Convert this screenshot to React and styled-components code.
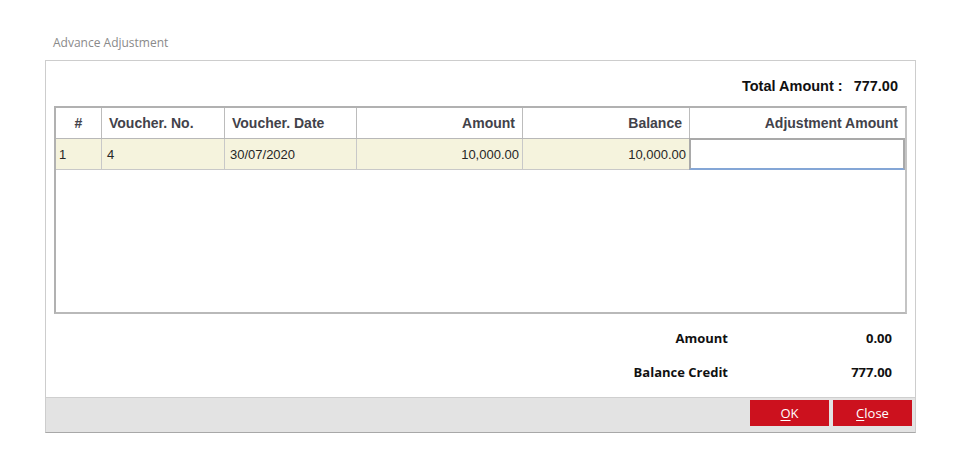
import styled, { createGlobalStyle } from "styled-components";

const GlobalStyle = createGlobalStyle`
  body {
    margin: 0;
    background: #ffffff;
    font-family: "Liberation Sans", Arial, sans-serif;
  }
`;

const rows = [
  { no: "1", voucher: "4", date: "30/07/2020", amount: "10,000.00", balance: "10,000.00" },
];

const cols = "46px 123px 132px 166px 167px 1fr";

function App() {
  return (
    <>
      <GlobalStyle />
      <Page>
        <Title>Advance Adjustment</Title>
        <Dialog>
          <TotalRow>
            <span>Total Amount :</span>
            <span>777.00</span>
          </TotalRow>
          <GridBox>
            <HeadRow>
              <HeadCell align="center">#</HeadCell>
              <HeadCell>Voucher. No.</HeadCell>
              <HeadCell>Voucher. Date</HeadCell>
              <HeadCell align="right">Amount</HeadCell>
              <HeadCell align="right">Balance</HeadCell>
              <HeadCell align="right" last>Adjustment Amount</HeadCell>
            </HeadRow>
            {rows.map((r) => (
              <DataRow key={r.no}>
                <Cell pad="3px">{r.no}</Cell>
                <Cell>{r.voucher}</Cell>
                <Cell>{r.date}</Cell>
                <Cell align="right">{r.amount}</Cell>
                <Cell align="right">{r.balance}</Cell>
                <EditCell />
              </DataRow>
            ))}
          </GridBox>
          <Summary>
            <Label>Amount</Label>
            <Value>0.00</Value>
            <Label>Balance Credit</Label>
            <Value>777.00</Value>
          </Summary>
          <Footer>
            <Button>
              <u>O</u>K
            </Button>
            <Button>
              <u>C</u>lose
            </Button>
          </Footer>
        </Dialog>
      </Page>
    </>
  );
}

const Page = styled.div`
  padding: 35px 0 0 45px;
  width: 871px;
`;

const Title = styled.div`
  font-family: "Open Sans", "Noto Sans", sans-serif;
  font-size: 12px;
  color: #8a8a8a;
  padding-left: 8px;
  height: 25px;
  line-height: 16px;
`;

const Dialog = styled.div`
  border: 1px solid #cdcdcd;
  border-bottom: 1px solid #a8a8a8;
  background: #ffffff;
  display: flex;
  flex-direction: column;
  height: 373px;
  box-sizing: border-box;
`;

const TotalRow = styled.div`
  height: 45px;
  display: flex;
  justify-content: flex-end;
  align-items: center;
  gap: 11px;
  padding: 5px 17px 0 0;
  font-size: 14.5px;
  font-weight: bold;
  color: #111;
  box-sizing: border-box;
`;

const GridBox = styled.div`
  margin: 0 8px;
  height: 208px;
  box-sizing: border-box;
  border: 2px solid #b1b1b1;
  border-right-color: #c4c4c4;
  border-bottom-color: #b9b9b9;
  background: #ffffff;
`;

const HeadRow = styled.div`
  display: grid;
  grid-template-columns: ${cols};
  height: 30px;
  border-bottom: 1px solid #b8b8b8;
`;

const HeadCell = styled.div`
  display: flex;
  align-items: center;
  justify-content: ${(p) =>
    p.align === "right" ? "flex-end" : p.align === "center" ? "center" : "flex-start"};
  padding: 0 7px;
  font-size: 14px;
  font-weight: bold;
  color: #42424a;
  border-right: ${(p) => (p.last ? "none" : "1px solid #bcbcbc")};
  white-space: nowrap;
`;

const DataRow = styled.div`
  display: grid;
  grid-template-columns: ${cols};
  height: 30px;
  border-bottom: 1px solid #c8c8c8;
  background: #f5f3dd;
`;

const Cell = styled.div`
  display: flex;
  align-items: center;
  justify-content: ${(p) => (p.align === "right" ? "flex-end" : "flex-start")};
  padding: ${(p) => (p.align === "right" ? "0 3px 0 0" : `0 0 0 ${p.pad || "5px"}`)};
  font-size: 13px;
  color: #262626;
  border-right: 1px solid #c8c8c8;
`;

const EditCell = styled.div`
  background: #ffffff;
  border: 2px solid #a9a9a9;
  border-bottom: 2px solid #84a6d6;
  margin: -1px 0 -1px -1px;
`;

const Summary = styled.div`
  flex: 1;
  display: grid;
  grid-template-columns: 1fr 164px;
  grid-auto-rows: 34px;
  align-content: start;
  padding: 7px 23px 0 0;
  font-family: "Open Sans", "Noto Sans", sans-serif;
  font-size: 13px;
  font-weight: bold;
  color: #111;
`;

const Label = styled.div`
  text-align: right;
  line-height: 34px;
`;

const Value = styled.div`
  text-align: right;
  line-height: 34px;
`;

const Footer = styled.div`
  height: 35px;
  box-sizing: border-box;
  background: #e3e3e3;
  border-top: 1px solid #cfcfcf;
  display: flex;
  justify-content: flex-end;
  align-items: flex-start;
  gap: 4px;
  padding: 2px 3px 0 0;
`;

const Button = styled.button`
  width: 79px;
  height: 26px;
  border: none;
  background: #cc111e;
  color: #ffffff;
  font-family: "Open Sans", "Noto Sans", sans-serif;
  font-size: 13px;
  padding: 0;
  cursor: pointer;
  u {
    text-underline-offset: 2px;
  }
`;

export default App;
